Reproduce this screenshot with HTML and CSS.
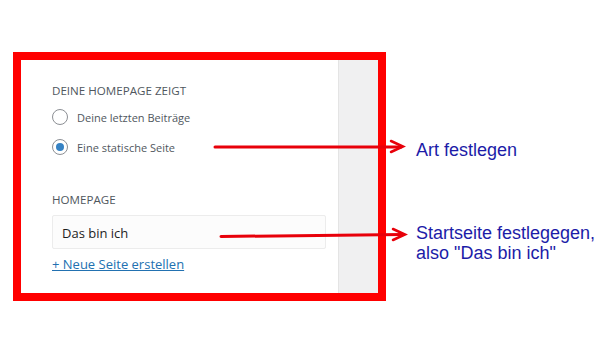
FILE: index.html
```html
<!DOCTYPE html>
<html lang="de">

<head>
    <meta charset="UTF-8">
    <meta name="viewport" content="width=device-width, initial-scale=1.0">
    <title>Homepage Einstellungen</title>
    <link rel="stylesheet" href="styles.css">
</head>

<body>
    <div class="page">
        <div class="frame">
            <div class="panel">
                <div class="heading">Deine Homepage zeigt</div>
                <label class="option">
                    <span class="radio"></span>
                    Deine letzten Beiträge
                </label>
                <label class="option">
                    <span class="radio checked"></span>
                    Eine statische Seite
                </label>

                <div class="heading second">Homepage</div>
                <div class="select">Das bin ich</div>
                <a class="new-page" href="#">+ Neue Seite erstellen</a>
            </div>
            <div class="side"></div>
        </div>

        <div class="notes">
            <p class="note first">Art festlegen</p>
            <p class="note">Startseite festlegegen,<br>also "Das bin ich"</p>
        </div>
    </div>

    <!-- Pfeile liegen über dem Screenshot -->
    <svg class="arrows" width="600" height="350" viewBox="0 0 600 350">
        <g stroke="#e8000a" stroke-width="3" fill="none" stroke-linecap="round">
            <line x1="215" y1="147" x2="401" y2="147" />
            <polyline points="391,141 403,146.5 391,152" stroke-width="2.5" />
            <line x1="221" y1="236.5" x2="403" y2="234.5" />
            <polyline points="393,229 405,234.5 393,240" stroke-width="2.5" />
        </g>
    </svg>
</body>

</html>
```

FILE: styles.css
```css
html,
body {
    margin: 0;
    background-color: #fff;
}

body {
    position: relative;
    width: 600px;
    height: 350px;
    overflow: hidden;
}

.page {
    display: flex;
    align-items: flex-start;
}

.frame {
    display: flex;
    box-sizing: border-box;
    width: 373px;
    height: 249px;
    margin-top: 52px;
    margin-left: 13px;
    border: 8px solid #ff0000;
    font-family: 'Open Sans', 'Noto Sans', sans-serif;
    color: #3c434a;
}

.panel {
    flex: 1;
    padding: 23px 12px 0 31px;
}

.side {
    width: 39px;
    background-color: #f0f0f1;
    border-left: 1px solid #e4e4e4;
}

.heading {
    font-size: 11.6px;
    line-height: 16px;
    text-transform: uppercase;
    color: #50575e;
}

.heading.second {
    margin-top: 37px;
}

.option {
    display: flex;
    align-items: center;
    gap: 9px;
    height: 16px;
    margin-top: 10px;
    font-size: 11px;
    color: #50575e;
}

.option + .option {
    margin-top: 14px;
}

.radio {
    display: flex;
    align-items: center;
    justify-content: center;
    box-sizing: border-box;
    width: 16px;
    height: 16px;
    border: 1px solid #8c8f94;
    border-radius: 50%;
    background-color: #fff;
}

.radio.checked::after {
    content: "";
    width: 8px;
    height: 8px;
    border-radius: 50%;
    background-color: #3582c4;
}

.select {
    box-sizing: border-box;
    height: 34px;
    margin-top: 7px;
    padding: 0 9px;
    border: 1px solid #ececec;
    border-radius: 2px;
    background-color: #fcfcfc;
    font-size: 13px;
    line-height: 34px;
    color: #1e1e1e;
}

.new-page {
    display: inline-block;
    margin-top: 7px;
    font-size: 13px;
    line-height: 16px;
    color: #2271b1;
    text-decoration: underline;
}

.notes {
    margin-left: 30px;
    padding-top: 140px;
    font-family: 'Liberation Sans', Arial, sans-serif;
    color: #1c1ca8;
}

.note {
    margin: 0;
    font-size: 18px;
    line-height: 20px;
}

.note.first {
    margin-bottom: 63px;
}

.arrows {
    position: absolute;
    top: 0;
    left: 0;
    pointer-events: none;
}
```
